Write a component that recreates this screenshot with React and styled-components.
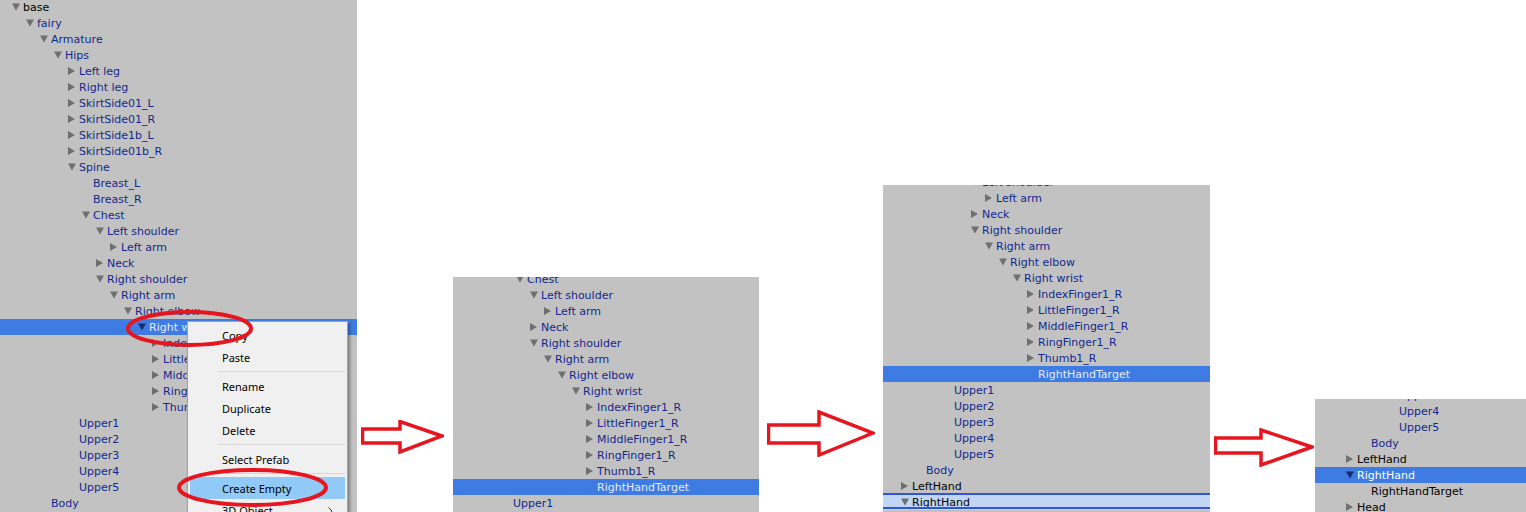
import React from 'react';
import styled, { createGlobalStyle, css } from 'styled-components';

const Global = createGlobalStyle`
  html, body { margin: 0; padding: 0; background: #ffffff; }
  body { font-family: "DejaVu Sans", "Liberation Sans", sans-serif; }
  * { box-sizing: border-box; }
`;

const Stage = styled.div`
  width: 1526px;
  height: 512px;
  display: flex;
  align-items: flex-end;
  overflow: hidden;
  background: #ffffff;
`;

const Panel = styled.div`
  position: relative;
  flex: none;
  width: ${(p) => p.$w}px;
  height: ${(p) => p.$h}px;
  background: #c2c2c2;
  overflow: hidden;
`;

const TreeList = styled.div`
  display: flex;
  flex-direction: column;
  margin-top: ${(p) => p.$offset}px;
`;

const Row = styled.div`
  position: relative;
  flex: none;
  height: 16px;
  display: flex;
  align-items: center;
  padding-left: ${(p) => p.$indent}px;
  font-size: 11px;
  line-height: 16px;
  white-space: nowrap;
  background: ${(p) => (p.$selected ? '#3e7ce4' : p.$drop ? '#c1d5f4' : 'transparent')};
  ${(p) =>
    p.$drop &&
    css`
      &::before,
      &::after {
        content: '';
        position: absolute;
        left: 0;
        right: 0;
        height: 2px;
        background: #2f56d9;
      }
      &::before { top: -1px; }
      &::after { bottom: 1px; }
    `}
`;

const Toggle = styled.span`
  flex: none;
  width: 12px;
  height: 16px;
  display: flex;
  align-items: center;
  padding-left: 1px;
  svg { display: block; }
`;

const Label = styled.span`
  padding-top: 2px;
  color: ${(p) =>
    p.$selected ? (p.$prefab ? '#e6eafa' : '#ffffff') : p.$prefab ? '#13288d' : '#000000'};
`;

const Menu = styled.div`
  position: absolute;
  left: 187px;
  top: 321px;
  width: 161px;
  padding: 2px;
  display: flex;
  flex-direction: column;
  background: #f0f0f0;
  border: 1px solid #a3a3a3;
  box-shadow: 2px 2px 3px rgba(0, 0, 0, 0.35);
  font-family: "Noto Sans", "Liberation Sans", sans-serif;
  font-size: 11px;
  color: #000000;
`;

const MenuItem = styled.div`
  height: 22px;
  display: flex;
  align-items: center;
  justify-content: space-between;
  padding: 1px 12px 0 32px;
  line-height: 21px;
  background: ${(p) => (p.$hot ? '#91c9f7' : 'transparent')};
`;

const MenuSeparator = styled.div`
  height: 1px;
  margin: 3px 0 3px 28px;
  background: #d7d7d7;
`;

const Marks = styled.svg`
  position: absolute;
  left: 0;
  top: 0;
  pointer-events: none;
`;

const ArrowSlot = styled.div`
  flex: none;
  width: ${(p) => p.$w}px;
  padding-left: ${(p) => p.$pad}px;
  margin-bottom: ${(p) => p.$bottom}px;
  svg { display: block; }
`;

const RED = '#e5161f';

function Triangle({ open, selected }) {
  const fill = selected ? '#1d2b6e' : '#6f6f6f';
  return open ? (
    <svg width="8" height="8" viewBox="0 0 8 8">
      <polygon points="0,0.5 8,0.5 4,7.5" fill={fill} />
    </svg>
  ) : (
    <svg width="8" height="8" viewBox="0 0 8 8">
      <polygon points="0,0 7,4 0,8" fill={fill} />
    </svg>
  );
}

function Tree({ rows, baseX, offset }) {
  return (
    <TreeList $offset={offset}>
      {rows.map((r, i) => (
        <Row key={i} $indent={baseX + 14 * r.d - 12} $selected={r.sel} $drop={r.drop}>
          <Toggle>{r.s ? <Triangle open={r.s === 'o'} selected={r.sel} /> : null}</Toggle>
          <Label $prefab={!r.plain} $selected={r.sel}>
            {r.t}
          </Label>
        </Row>
      ))}
    </TreeList>
  );
}

const n = (t, d, s, extra = {}) => ({ t, d, s, ...extra });

const fingers = [
  n('IndexFinger1_R', 10, 'c'),
  n('LittleFinger1_R', 10, 'c'),
  n('MiddleFinger1_R', 10, 'c'),
  n('RingFinger1_R', 10, 'c'),
  n('Thumb1_R', 10, 'c'),
];

const uppers = [1, 2, 3, 4, 5].map((k) => n(`Upper${k}`, 4));

const panel1 = [
  n('base', 0, 'o', { plain: true }),
  n('fairy', 1, 'o'),
  n('Armature', 2, 'o'),
  n('Hips', 3, 'o'),
  n('Left leg', 4, 'c'),
  n('Right leg', 4, 'c'),
  n('SkirtSide01_L', 4, 'c'),
  n('SkirtSide01_R', 4, 'c'),
  n('SkirtSide1b_L', 4, 'c'),
  n('SkirtSide01b_R', 4, 'c'),
  n('Spine', 4, 'o'),
  n('Breast_L', 5),
  n('Breast_R', 5),
  n('Chest', 5, 'o'),
  n('Left shoulder', 6, 'o'),
  n('Left arm', 7, 'c'),
  n('Neck', 6, 'c'),
  n('Right shoulder', 6, 'o'),
  n('Right arm', 7, 'o'),
  n('Right elbow', 8, 'o'),
  n('Right wrist', 9, 'o', { sel: true }),
  ...fingers,
  ...uppers,
  n('Body', 2),
];

const panel2 = [
  n('Chest', 5, 'o'),
  n('Left shoulder', 6, 'o'),
  n('Left arm', 7, 'c'),
  n('Neck', 6, 'c'),
  n('Right shoulder', 6, 'o'),
  n('Right arm', 7, 'o'),
  n('Right elbow', 8, 'o'),
  n('Right wrist', 9, 'o'),
  ...fingers,
  n('RightHandTarget', 10, null, { sel: true }),
  n('Upper1', 4),
];

const panel3 = [
  n('Left shoulder', 6, 'o'),
  n('Left arm', 7, 'c'),
  n('Neck', 6, 'c'),
  n('Right shoulder', 6, 'o'),
  n('Right arm', 7, 'o'),
  n('Right elbow', 8, 'o'),
  n('Right wrist', 9, 'o'),
  ...fingers,
  n('RightHandTarget', 10, null, { sel: true }),
  ...uppers,
  n('Body', 2),
  n('LeftHand', 1, 'c', { plain: true }),
  n('RightHand', 1, 'o', { plain: true, drop: true }),
];

const panel4 = [
  n('Upper3', 4),
  n('Upper4', 4),
  n('Upper5', 4),
  n('Body', 2),
  n('LeftHand', 1, 'c', { plain: true }),
  n('RightHand', 1, 'o', { plain: true, sel: true }),
  n('RightHandTarget', 2, null, { plain: true }),
  n('Head', 1, 'c', { plain: true }),
];

function Arrow({ w, h, shaftTop, shaftBottom, headX, headTop, headBottom, tipY }) {
  const pts = [
    [1.5, shaftTop],
    [headX, shaftTop],
    [headX, headTop],
    [w - 2, tipY],
    [headX, headBottom],
    [headX, shaftBottom],
    [1.5, shaftBottom],
  ]
    .map((p) => p.join(','))
    .join(' ');
  return (
    <svg width={w} height={h} viewBox={`0 0 ${w} ${h}`}>
      <polygon points={pts} fill="none" stroke={RED} strokeWidth="3.5" strokeLinejoin="miter" />
    </svg>
  );
}

function Chevron() {
  return (
    <svg width="5" height="8" viewBox="0 0 5 8">
      <polyline points="0.5,0.5 4,4 0.5,7.5" fill="none" stroke="#333" strokeWidth="1" />
    </svg>
  );
}

export default function App() {
  return (
    <>
      <Global />
      <Stage>
        <Panel $w={357} $h={512}>
          <Tree rows={panel1} baseX={23} offset={-1} />
          <Menu>
            <MenuItem>Copy</MenuItem>
            <MenuItem>Paste</MenuItem>
            <MenuSeparator />
            <MenuItem>Rename</MenuItem>
            <MenuItem>Duplicate</MenuItem>
            <MenuItem>Delete</MenuItem>
            <MenuSeparator />
            <MenuItem>Select Prefab</MenuItem>
            <MenuSeparator />
            <MenuItem $hot>Create Empty</MenuItem>
            <MenuItem>
              <span>3D Object</span>
              <Chevron />
            </MenuItem>
          </Menu>
          <Marks width="357" height="512" viewBox="0 0 357 512">
            <ellipse cx="189.5" cy="328.5" rx="61.5" ry="16.5" fill="none" stroke={RED} strokeWidth="4" />
            <ellipse cx="252.5" cy="487.5" rx="73.5" ry="17.5" fill="none" stroke={RED} strokeWidth="4" />
          </Marks>
        </Panel>

        <ArrowSlot $w={96} $pad={4} $bottom={58}>
          <Arrow w={83} h={34} shaftTop={9} shaftBottom={23} headX={39} headTop={1.5} headBottom={32} tipY={16} />
        </ArrowSlot>

        <Panel $w={306} $h={235}>
          <Tree rows={panel2} baseX={4} offset={-6} />
        </Panel>

        <ArrowSlot $w={124} $pad={8} $bottom={55}>
          <Arrow w={108} h={47} shaftTop={15} shaftBottom={33} headX={52} headTop={2} headBottom={45} tipY={23} />
        </ArrowSlot>

        <Panel $w={327} $h={327}>
          <Tree rows={panel3} baseX={15} offset={-11} />
        </Panel>

        <ArrowSlot $w={105} $pad={4} $bottom={45}>
          <Arrow w={100} h={39} shaftTop={10} shaftBottom={25} headX={47} headTop={2} headBottom={37} tipY={19} />
        </ArrowSlot>

        <Panel $w={211} $h={113}>
          <Tree rows={panel4} baseX={28} offset={-12} />
        </Panel>
      </Stage>
    </>
  );
}
